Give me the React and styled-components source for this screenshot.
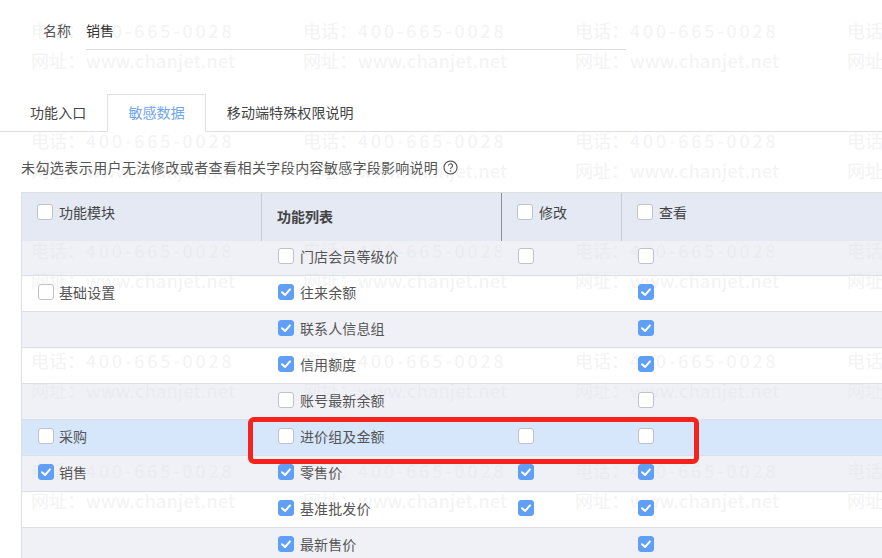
import React from "react";
import styled, { createGlobalStyle } from "styled-components";

const Global = createGlobalStyle`
  html, body { margin: 0; padding: 0; background: #fff; }
  body { font-family: "Noto Sans CJK SC", "Noto Sans", sans-serif; }
`;
const Page = styled.div`
  position: relative; width: 882px; height: 558px; overflow: hidden;
  font-size: 14px; color: #555; line-height: 16px;
`;
const Watermark = styled.div`
  position: absolute; left: 31px; top: 15px; z-index: 0;
  display: grid; grid-template-columns: repeat(4, 272px); grid-auto-rows: 110px;
  pointer-events: none;
`;
const MarkTile = styled.div`
  font-size: 18px; line-height: 30px; color: #f3f3f3; white-space: nowrap;
`;
const MarkLine = styled.div` display: flex; `;
const MarkLabel = styled.span` width: 55px; `;
const MarkValue = styled.span` letter-spacing: ${p => p.$spacing}px; `;
const Content = styled.div` position: relative; z-index: 1; `;
const NameRow = styled.div`
  display: flex; height: 50px; padding-left: 43px; box-sizing: border-box; padding-top: 22px;
`;
const NameLabel = styled.div` width: 43px; color: #555; `;
const NameValue = styled.div`
  width: 540px; height: 28px; border-bottom: 1px solid #dcdcdc; color: #333;
  box-sizing: border-box;
`;
const Tabs = styled.div`
  display: flex; margin-top: 44px; border-bottom: 1px solid #dcdfe6;
  height: 37px; padding-left: 9px;
`;
const Tab = styled.div`
  display: flex; align-items: center; justify-content: center; box-sizing: border-box;
  padding: 0 20px 3px; height: ${p => (p.$active ? 38 : 37)}px;
  letter-spacing: 0.1px;
  color: ${p => (p.$active ? "#6ea5ec" : "#444")};
  ${p => p.$active ? "border: 1px solid #dcdfe6; border-bottom: 1px solid #fff; background: #fff;" : "border: 1px solid transparent; border-bottom: 0;"}
`;
const Hint = styled.div`
  display: flex; align-items: center; height: 16px; margin: 27px 0 0 21px; white-space: nowrap; color: #555;
`;
const HintPart = styled.span` letter-spacing: ${p => p.$spacing}px; `;
const HelpIcon = styled.svg` width: 15px; height: 15px; margin-left: 5px; color: #444; `;
const Table = styled.div` margin: 17px 0 0 21px; width: 900px; border-left: 1px solid #dcdfe6; `;
const HeadRow = styled.div`
  position: relative; z-index: 2; display: grid; grid-template-columns: 240px 240px 120px 1fr;
  height: 49px; box-sizing: border-box; background: #e4e9f4; border-top: 1px solid #dcdfe6;
`;
const HeadCell = styled.div`
  display: flex; align-items: flex-start; gap: 6px; box-sizing: border-box;
  padding: 11px 0 0 15px; color: #444;
  border-right: 1px solid ${p => p.$line || "transparent"};
`;
const HeadTitle = styled.span` line-height: 17px; `;
const ListTitle = styled.span`
  font-weight: 700; color: #444; margin-top: 4px; line-height: 17px; font-size: 14px;
`;
const Row = styled.div`
  display: grid; grid-template-columns: 240px 240px 120px 1fr; height: 36px; box-sizing: border-box;
  border-bottom: 1px solid #dcdfe6; margin-top: ${p => (p.$first ? "-1px" : 0)};
  background: ${p => p.$tone === "hi" ? "#d6e6fb" : p.$tone === "gray" ? "rgba(225,228,238,.5)" : "transparent"};
`;
const Cell = styled.div`
  display: flex; align-items: flex-start; gap: ${p => p.$gap || 6}px; box-sizing: border-box;
  padding: 8px 0 0 16px;
`;
const CellText = styled.span` line-height: 16px; color: #555; letter-spacing: 0.1px; `;
const Box = styled.span`
  flex: none; display: inline-flex; align-items: center; justify-content: center;
  width: 16px; height: 16px; box-sizing: border-box; border-radius: 3px;
  background: ${p => (p.$on ? "#5f9ff5" : "#fff")};
  border: 1px solid ${p => (p.$on ? "#5f9ff5" : "#bfc2c8")};
`;
const Mark = styled.svg` width: 12px; height: 12px; `;
const Highlight = styled.div`
  position: absolute; z-index: 3; left: 248px; top: 417px; width: 451px; height: 47px;
  box-sizing: border-box; border: 5px solid #f5231b; border-radius: 6px; pointer-events: none;
`;

const Check = ({ on }) => (
  <Box $on={on}>
    {on && (
      <Mark viewBox="0 0 12 12" fill="none">
        <path d="M2 6.2 5 9l5-5.6" stroke="#fff" strokeWidth="2" strokeLinecap="round" strokeLinejoin="round" />
      </Mark>
    )}
  </Box>
);

const rows = [
  { mod: "", name: "门店会员等级价", on: false, edit: false, view: false, tone: "gray" },
  { mod: "基础设置", name: "往来余额", on: true, view: true, tone: "white" },
  { name: "联系人信息组", on: true, view: true, tone: "gray" },
  { name: "信用额度", on: true, view: true, tone: "white" },
  { name: "账号最新余额", on: false, view: false, tone: "gray" },
  { mod: "采购", modOn: false, name: "进价组及金额", on: false, edit: false, view: false, tone: "hi" },
  { mod: "销售", modOn: true, name: "零售价", on: true, edit: true, view: true, tone: "gray" },
  { name: "基准批发价", on: true, edit: true, view: true, tone: "white" },
  { name: "最新售价", on: true, view: true, tone: "gray" },
];

export default function App() {
  return (
    <Page>
      <Global />
      <Watermark>
        {Array.from({ length: 20 }, (_, i) => (
          <MarkTile key={i}>
            <MarkLine><MarkLabel>电话：</MarkLabel><MarkValue $spacing={3}>400-665-0028</MarkValue></MarkLine>
            <MarkLine><MarkLabel>网址：</MarkLabel><MarkValue $spacing={0.45}>www.chanjet.net</MarkValue></MarkLine>
          </MarkTile>
        ))}
      </Watermark>
      <Content>
        <NameRow>
          <NameLabel>名称</NameLabel>
          <NameValue>销售</NameValue>
        </NameRow>
        <Tabs>
          <Tab>功能入口</Tab>
          <Tab $active>敏感数据</Tab>
          <Tab>移动端特殊权限说明</Tab>
        </Tabs>
        <Hint>
          <HintPart $spacing={0.43}>未勾选表示用户无法修改或者查看相关字段内容</HintPart>
          <HintPart $spacing={0.25}>敏感字段影响说明</HintPart>
          <HelpIcon viewBox="0 0 16 16" fill="none">
            <circle cx="8" cy="8" r="7" stroke="currentColor" strokeWidth="1.1" />
            <path d="M5.9 6.2a2.1 2.1 0 1 1 3.3 1.7c-.8.5-1.2.9-1.2 1.8" stroke="currentColor" strokeWidth="1.1" />
            <circle cx="8" cy="11.7" r=".8" fill="currentColor" />
          </HelpIcon>
        </Hint>
        <Table>
          <HeadRow>
            <HeadCell $line="#c8ccd4"><Check /><HeadTitle>功能模块</HeadTitle></HeadCell>
            <HeadCell $line="#8d9096"><ListTitle>功能列表</ListTitle></HeadCell>
            <HeadCell $line="#c8ccd4"><Check /><HeadTitle>修改</HeadTitle></HeadCell>
            <HeadCell><Check /><HeadTitle>查看</HeadTitle></HeadCell>
          </HeadRow>
          {rows.map((r, i) => (
            <Row key={r.name} $tone={r.tone} $first={i === 0}>
              <Cell $gap={5}>
                {r.mod && <><Check on={r.modOn} /><CellText>{r.mod}</CellText></>}
              </Cell>
              <Cell><Check on={r.on} /><CellText>{r.name}</CellText></Cell>
              <Cell>{r.edit !== undefined && <Check on={r.edit} />}</Cell>
              <Cell><Check on={r.view} /></Cell>
            </Row>
          ))}
        </Table>
      </Content>
      <Highlight />
    </Page>
  );
}
